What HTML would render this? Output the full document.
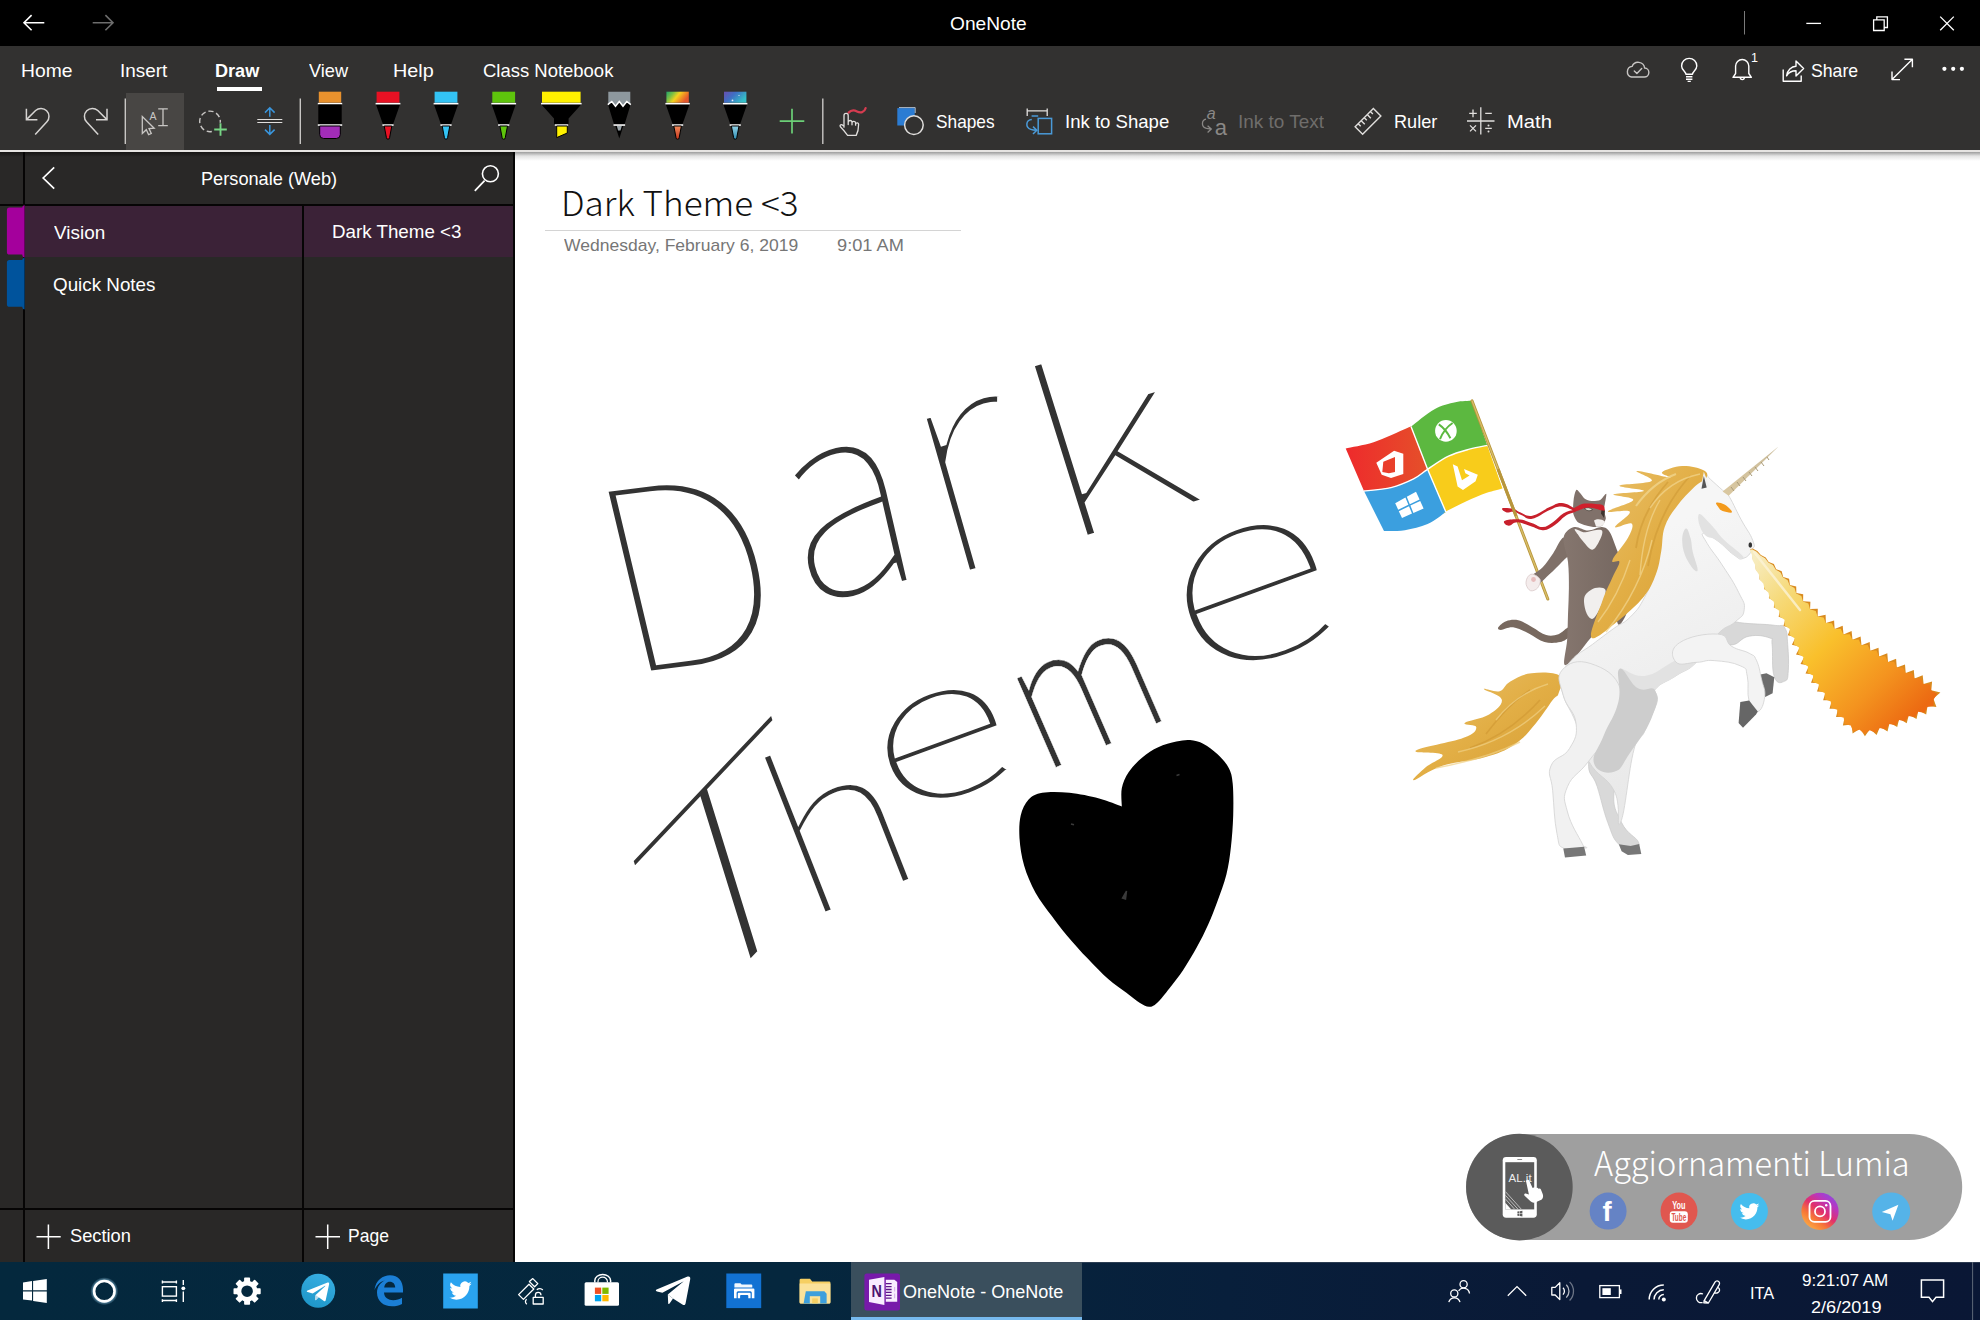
<!DOCTYPE html>
<html lang="en">
<head>
<meta charset="utf-8">
<title>OneNote</title>
<style>
*{margin:0;padding:0;box-sizing:border-box}
html,body{width:1980px;height:1320px;overflow:hidden;background:#fff}
body{position:relative;font-family:"Liberation Sans","DejaVu Sans",sans-serif;color:#fff}
.abs{position:absolute}
.t{position:absolute;white-space:nowrap;line-height:1;color:#fff;transform-origin:0 0}
svg{position:absolute;overflow:visible}
#titlebar{left:0;top:0;width:1980px;height:46px;background:#000}
#ribbon{left:0;top:46px;width:1980px;height:104px;background:#323130}
#ribline{left:0;top:150px;width:1980px;height:2px;background:#e6e4e2}
#nav{left:0;top:152px;width:514px;height:1110px;background:#292827}
#navshadow{left:0;top:152px;width:514px;height:5px;background:linear-gradient(#161514,#292827)}
#pageshadow{left:514px;top:152px;width:1466px;height:9px;background:linear-gradient(#9d9d9d,#e4e4e4 45%,#fff)}
.vline{position:absolute;background:#060505}
.hline{position:absolute;background:#060505}
#selrow{left:24px;top:205px;width:490px;height:52px;background:#3b2237}
#taskbar{left:0;top:1262px;width:1980px;height:58px;background:linear-gradient(90deg,#04283d 0%,#05273e 40%,#081f3b 62%,#0a1936 80%,#0a1735 100%)}
#tbactive{left:851px;top:1262px;width:231px;height:58px;background:#3a4f5d}
#tbactiveline{left:851px;top:1317px;width:231px;height:3px;background:#76b9ed}
.lt{font-family:"Noto Sans CJK SC","Liberation Sans",sans-serif;font-weight:300}
</style>
</head>
<body>
<!-- ===== window chrome ===== -->
<div id="titlebar" class="abs"></div>
<div id="ribbon" class="abs"></div>
<div id="ribline" class="abs"></div>
<div id="nav" class="abs"></div>
<div id="navshadow" class="abs"></div>
<div id="pageshadow" class="abs"></div>
<div class="abs" id="drawline" style="left:217px;top:87px;width:45px;height:4px;background:#fff"></div>
<div class="abs" id="selTool" style="left:126px;top:93px;width:58px;height:57px;background:#484644"></div>
<!-- ===== navigation panel ===== -->
<div id="selrow" class="abs"></div>
<div class="vline" style="left:23px;top:152px;width:2px;height:1110px"></div>
<div class="vline" style="left:302px;top:205px;width:2px;height:1057px"></div>
<div class="hline" style="left:0;top:204px;width:514px;height:1.5px"></div>
<div class="hline" style="left:0;top:1208px;width:514px;height:1.5px"></div>
<div class="abs" id="titleline" style="left:545px;top:230px;width:416px;height:1px;background:#d4d4d4"></div>
<!-- ===== taskbar ===== -->
<div id="taskbar" class="abs"></div>
<div id="tbactive" class="abs"></div>
<div id="tbactiveline" class="abs"></div>
<!-- ===== title bar + ribbon icons ===== -->
<svg id="ribsvg" width="1980" height="152" viewBox="0 0 1980 152" style="left:0;top:0" fill="none" stroke-linecap="butt" stroke-linejoin="miter">
<defs>
<linearGradient id="gRain" x1="0" y1="0" x2="1" y2="0.4"><stop offset="0" stop-color="#1fa36b"/><stop offset="0.3" stop-color="#7bc043"/><stop offset="0.55" stop-color="#f4d21f"/><stop offset="0.8" stop-color="#f08a24"/><stop offset="1" stop-color="#e4572e"/></linearGradient>
<linearGradient id="gRainTip" x1="0" y1="0" x2="0" y2="1"><stop offset="0" stop-color="#f08a5a"/><stop offset="1" stop-color="#c8351c"/></linearGradient>
<linearGradient id="gGal" x1="0" y1="0" x2="1" y2="0.5"><stop offset="0" stop-color="#6a4fb0"/><stop offset="0.45" stop-color="#3f6fc4"/><stop offset="1" stop-color="#35c0c8"/></linearGradient>
<linearGradient id="gGalTip" x1="0" y1="0" x2="0" y2="1"><stop offset="0" stop-color="#8fd0e6"/><stop offset="1" stop-color="#2f8fb4"/></linearGradient>
</defs>
<!-- title bar -->
<g stroke="#fff" stroke-width="1.6">
<path d="M44.3 22.7H24M31.6 15.1L24 22.7l7.6 7.6"/>
</g>
<g stroke="#6d6d6d" stroke-width="1.6">
<path d="M92.7 22.7H113M105.4 15.1l7.6 7.6-7.6 7.6"/>
</g>
<path d="M1744.5 11V34.5" stroke="#7a7a7a" stroke-width="1"/>
<g stroke="#fff" stroke-width="1.3">
<path d="M1806.3 23.4H1821"/>
<path d="M1873.6 19.9h10.6v10.6h-10.6zM1876.8 19.9v-3h10.6v10.6h-3.2"/>
<path d="M1940.2 16.6l13.6 13.6M1953.8 16.6l-13.6 13.6"/>
</g>
<!-- right side of tab row -->
<g stroke="#c8c6c4" stroke-width="1.4" stroke-linejoin="round" stroke-linecap="round">
<path d="M1631.500 77h12.600a4.500 4.500 0 0 0 .5-9a6.500 6.500 0 0 0-12.500-1.600a5.400 5.400 0 0 0-.6 10.600z"/>
<path d="M1634.300 71l2.600 2.600l4.800-5"/>
</g>
<g stroke="#fff" stroke-width="1.4" stroke-linejoin="round">
<path d="M1686 76.800h6.400M1686 79.200h6.400M1687.600 81.400h3.200"/>
<path d="M1685.900 74.300c0-2.800-4.300-4.200-4.300-8.400a7.600 7.600 0 0 1 15.200 0c0 4.200-4.300 5.600-4.300 8.400z"/>
<path d="M1733 77.3h18.4l-2.6-3.8v-7.4a6.6 6.6 0 0 0-13.2 0v7.4z"/>
<path d="M1740.3 77.6a2 2 0 0 0 4 0"/>
<path d="M1783.200 69.600V81.300H1801.200V75.400"/>
<path d="M1786.600 75.800c.7-5.800 4.800-9.300 9.400-9.500v-5.300l7.600 7.500l-7.600 7.500v-5.200c-4.200 0-7.200 1.400-9.400 5z"/>
<path d="M1892 79.6l20.400-20.400M1904.4 59.2h8v8M1892 71.600v8h8"/>
</g>
<g fill="#fff" stroke="none">
<circle cx="1944.400" cy="68.800" r="2.100"/><circle cx="1953.200" cy="68.800" r="2.100"/><circle cx="1961.900" cy="68.800" r="2.100"/>
</g>
<!-- undo / redo -->
<g stroke="#d6d4d2" stroke-width="1.5">
<path d="M26.4 108.800V119.700H37.400"/>
<path d="M26.700 119.400L35.600 110.500A8 8 0 0 1 46.900 121.800L35.200 134.600"/>
<path d="M107 108.800V119.700H96"/>
<path d="M106.700 119.400L97.800 110.500A8 8 0 0 0 86.500 121.800L98.200 134.600"/>
</g>
<!-- separators -->
<g stroke="#c8c6c4" stroke-width="1.4">
<path d="M125.300 98.500V144M300.300 98.500V144M822.800 98.500V144"/>
</g>
<!-- type / select tool -->
<g stroke="#c8c6c4" stroke-width="1.3" stroke-linejoin="miter">
<path d="M142.300 116.600V133.400L146.300 129.700L148.600 134.700L151.300 133.500L149 128.600L154.200 128.200Z"/>
<path d="M158.200 108.900H167.800M158.200 125.600H167.800M163 108.900V125.600"/>
</g>
<text x="149.600" y="119.600" font-family="'Liberation Sans',sans-serif" font-size="10.5" fill="#c8c6c4" stroke="none">A</text>
<!-- lasso select -->
<circle cx="210" cy="121.400" r="10.300" stroke="#c8c6c4" stroke-width="1.4" stroke-dasharray="5.200 2.900" stroke-dashoffset="2"/>
<path d="M220.500 122.800V136.200M213.800 129.500H227.200" stroke="#323130" stroke-width="5"/>
<path d="M220.500 123.200V135.800M214.200 129.500H226.800" stroke="#77d685" stroke-width="1.9"/>
<!-- insert space -->
<path d="M257.300 119.500H282.300M257.300 122.500H282.300" stroke="#e1dfdd" stroke-width="1.2"/>
<g stroke="#3a96dd" stroke-width="1.5">
<path d="M269.800 116.800V108.200M265 112.600L269.800 107.800L274.600 112.600"/>
<path d="M269.800 125V134M265 129.600L269.800 134.400L274.600 129.600"/>
</g>
<!-- pens -->
<g stroke="none">
 <!-- eraser-like marker -->
 <rect x="318.800" y="91.700" width="22.400" height="11" fill="#e8912d"/>
 <rect x="317.800" y="102.900" width="24.400" height="1.500" fill="#fff"/>
 <rect x="318.300" y="104.500" width="23.400" height="20" fill="#000"/>
 <rect x="317.800" y="124.300" width="24.400" height="1.500" fill="#fff"/>
 <path d="M319.700 126h20.600v8.500a4 4 0 0 1-4 4h-12.600a4 4 0 0 1-4-4z" fill="#a22cb8" stroke="#000" stroke-width="1"/>
 <!-- red pen -->
 <rect x="376.600" y="91.700" width="22.800" height="11" fill="#e81123"/>
 <path d="M376 104.500h24l-7 20h-10z" fill="#000"/>
 <rect x="375.600" y="102.900" width="24.800" height="1.500" fill="#fff"/>
 <rect x="382.400" y="124.300" width="11.200" height="1.500" fill="#fff"/>
 <path d="M384.200 126h7.600l-2.200 11.600a1.600 1.600 0 0 1-3.200 0z" fill="#e81123" stroke="#000" stroke-width="1"/>
 <!-- blue pen -->
 <rect x="434.600" y="91.700" width="22.800" height="11" fill="#33c3f4"/>
 <path d="M434 104.500h24l-7 20h-10z" fill="#000"/>
 <rect x="433.600" y="102.900" width="24.800" height="1.500" fill="#fff"/>
 <rect x="440.400" y="124.300" width="11.200" height="1.500" fill="#fff"/>
 <path d="M442.200 126h7.600l-2.200 11.600a1.600 1.600 0 0 1-3.200 0z" fill="#33c3f4" stroke="#000" stroke-width="1"/>
 <!-- green pen -->
 <rect x="492.300" y="91.700" width="22.800" height="11" fill="#5ec40c"/>
 <path d="M491.700 104.500h24l-7 20h-10z" fill="#000"/>
 <rect x="491.300" y="102.900" width="24.800" height="1.500" fill="#fff"/>
 <rect x="498.100" y="124.300" width="11.200" height="1.500" fill="#fff"/>
 <path d="M499.900 126h7.600l-2.200 11.600a1.600 1.600 0 0 1-3.200 0z" fill="#5ec40c" stroke="#000" stroke-width="1"/>
 <!-- yellow highlighter -->
 <rect x="542" y="91.700" width="38.600" height="11" fill="#fff100"/>
 <path d="M541.400 104.500h39.800l-12.600 14v6h-14.600v-6z" fill="#000"/>
 <rect x="541" y="102.900" width="40.600" height="1.500" fill="#fff"/>
 <rect x="554.800" y="124.300" width="13.400" height="1.500" fill="#fff"/>
 <path d="M556.700 126h10.600v7l-10.600 4.600z" fill="#fff100" stroke="#000" stroke-width="1"/>
 <!-- pencil -->
 <path d="M608.300 91.700h22v14l-4 -3l-3.500 4.500l-3.500 -4.500l-3.500 4.500l-3.500 -4.500l-4 3z" fill="#8e989e"/>
 <path d="M608 104.500l3.800 -3l3.700 4.700l3.800 -4.700l3.700 4.700l3.800 -4.700l3.800 3l-6 19.800h-10.600z" fill="#000"/>
 <path d="M607.800 104.700l4 -3.200l3.700 4.700l3.800 -4.700l3.700 4.700l3.800 -4.700l4 3.200" fill="none" stroke="#fff" stroke-width="1.500"/>
 <rect x="613.500" y="124.300" width="11.600" height="1.500" fill="#fff"/>
 <path d="M615.300 126h8l-4 12.500z" fill="#000"/>
 <path d="M616.800 126h5l-1.300 4.500h-2.400z" fill="#9aa3a8"/>
 <!-- rainbow pen -->
 <rect x="666.400" y="91.700" width="22.400" height="11" fill="url(#gRain)"/>
 <path d="M665.800 104.500h23.600l-7 20h-9.600z" fill="#000"/>
 <rect x="665.400" y="102.900" width="24.400" height="1.500" fill="#fff"/>
 <rect x="672" y="124.300" width="11.200" height="1.500" fill="#fff"/>
 <path d="M673.800 126h7.600l-2.200 11.600a1.600 1.600 0 0 1-3.200 0z" fill="url(#gRainTip)" stroke="#000" stroke-width="1"/>
 <!-- galaxy pen -->
 <rect x="724" y="91.700" width="22.400" height="11" fill="url(#gGal)"/>
 <circle cx="732.500" cy="100.400" r="0.900" fill="#e8f0ff"/><circle cx="739" cy="95.500" r="0.600" fill="#e8f0ff"/>
 <path d="M723.400 104.500h23.600l-7 20h-9.600z" fill="#000"/>
 <rect x="723" y="102.900" width="24.400" height="1.500" fill="#fff"/>
 <rect x="729.600" y="124.300" width="11.200" height="1.500" fill="#fff"/>
 <path d="M731.400 126h7.600l-2.200 11.600a1.600 1.600 0 0 1-3.200 0z" fill="url(#gGalTip)" stroke="#000" stroke-width="1"/>
</g>
<!-- add pen -->
<path d="M792 108.800V133.400M779.700 121.100H804.300" stroke="#6ccf77" stroke-width="1.700"/>
<!-- draw with touch -->
<path d="M848.600 112.600c3-3.200 5.800-2.600 8.400-1.200c3.400 1.800 7.400 1 8.600-3.200" stroke="#d63c50" stroke-width="2.300" stroke-linecap="round"/>
<path d="M844 127.200V115.400a2.100 2.100 0 0 1 4.200 0V124.600M848.200 122.400a1.900 1.900 0 0 1 3.800 0v2.400M852 123a1.800 1.800 0 0 1 3.600 .2v2M855.600 124.200a1.500 1.500 0 0 1 3 .3c0 5-.4 7.300-2.400 10.900h-8.600c-2.400-3.200-4.600-6-7.200-8.600c-1-1.300.4-2.700 1.900-1.900l1.700 1.400" stroke="#e1dfdd" stroke-width="1.300" stroke-linecap="round" stroke-linejoin="round"/>
<!-- shapes -->
<rect x="897.300" y="108.100" width="17.400" height="17.400" fill="#2b7cd3"/>
<path d="M899 107.600H915.200V113" stroke="#cfe0f2" stroke-width="1" opacity=".8"/>
<circle cx="913.900" cy="125.100" r="9.300" fill="#323130" stroke="#e1dfdd" stroke-width="1.500"/>
<!-- ink to shape -->
<path d="M1027 110.800H1047.400M1027.200 108.400V116M1047.200 108.400V116" stroke="#e1dfdd" stroke-width="1.300"/>
<g stroke="#4a9ad8" stroke-width="1.500">
<rect x="1038.200" y="118.400" width="13.400" height="15.400"/>
<path d="M1031.800 119.600c-6 .4-6.800 7.600-1 9.800c1.600.6 3.400.8 5.400.8M1033 126.600L1036.800 130.300L1033 134"/>
</g>
<path d="M1038.200 116H1031.600" stroke="#4a9ad8" stroke-width="1.500"/>
<!-- ink to text (disabled) -->
<g stroke="#8a8886" stroke-width="1.300">
<path d="M1206 119.200c-4.600 1-4.800 7.200-.2 9c1.400.5 3 .6 4.600.6M1207.600 125.700L1211.300 129L1207.600 132.400"/>
</g>
<text x="1206.800" y="118.600" font-family="'Liberation Sans',sans-serif" font-style="italic" font-size="16" fill="#8a8886" stroke="none">a</text>
<text x="1214.800" y="134.800" font-family="'Liberation Sans',sans-serif" font-size="22" fill="#8a8886" stroke="none">a</text>
<!-- ruler -->
<g transform="translate(1368 121.400) rotate(-45)" stroke="#e1dfdd" stroke-width="1.400">
<rect x="-12.900" y="-5.300" width="25.800" height="10.600"/>
<path d="M-8.600 -5.300v3.600M-4.300 -5.300v5M0 -5.300v3.600M4.300 -5.300v5M8.600 -5.300v3.600"/>
</g>
<!-- math -->
<g stroke="#e1dfdd" stroke-width="1.300">
<path d="M1480.800 107.300V134.400M1467 121H1494.500"/>
<path d="M1473 109.600v7.600M1469.200 113.400h7.600M1485.200 113.400h6.600M1470 125.400l6 6M1476 125.400l-6 6M1485.200 128.400h6.600"/>
</g>
<circle cx="1488.500" cy="125.400" r="1" fill="#e1dfdd"/><circle cx="1488.500" cy="131.400" r="1" fill="#e1dfdd"/>
</svg>
<!-- ===== navigation icons ===== -->
<svg id="navsvg" width="516" height="1110" viewBox="0 152 516 1110" style="left:0;top:152px" fill="none">
<path d="M513 152H515V1262H513z" fill="#050505"/>
<!-- section colour tabs -->
<path d="M9.500 207.600H22.300C22.300 206.400 23.200 205.300 24.600 205.300V257.700C23.200 257.700 22.300 256.300 22.300 254.600H9.500A2.600 2.600 0 0 1 6.900 252V210.200A2.600 2.600 0 0 1 9.500 207.600Z" fill="#a4009c"/>
<path d="M9.500 260H22.300C22.300 258.800 23.200 257.700 24.600 257.700V309.500C23.200 309.500 22.300 308.300 22.300 306.800H9.500A2.600 2.600 0 0 1 6.900 304.200V262.600A2.600 2.600 0 0 1 9.500 260Z" fill="#00539c"/>
<!-- back chevron + search -->
<path d="M54.200 167.400L43.200 178L54.200 188.600" stroke="#fff" stroke-width="1.700"/>
<circle cx="490.400" cy="173.800" r="8" stroke="#fff" stroke-width="1.600"/>
<path d="M484.600 180.600L474.800 190.800" stroke="#fff" stroke-width="1.700"/>
<!-- add section / add page -->
<path d="M48.400 1224.400V1249M36.500 1236.700H60.700" stroke="#fff" stroke-width="1.500"/>
<path d="M327.700 1224.400V1249M315.500 1236.700H340" stroke="#fff" stroke-width="1.500"/>
</svg>
<!-- ===== page canvas: ink + pasted illustration ===== -->
<svg id="artsvg" width="1466" height="1100" viewBox="514 160 1466 1100" style="left:514px;top:160px" fill="none">
<defs>
<linearGradient id="gFire" gradientUnits="userSpaceOnUse" x1="1756" y1="556" x2="1915" y2="715"><stop offset="0" stop-color="#f7ecc0"/><stop offset="0.22" stop-color="#f6d977"/><stop offset="0.5" stop-color="#f9c02c"/><stop offset="0.78" stop-color="#f4941f"/><stop offset="1" stop-color="#ec6a12"/></linearGradient>
<linearGradient id="gMane" x1="0" y1="0" x2="1" y2="1"><stop offset="0" stop-color="#e9c06a"/><stop offset="0.5" stop-color="#e2ae45"/><stop offset="1" stop-color="#d59c33"/></linearGradient>
<linearGradient id="gRed" x1="0" y1="0" x2="1" y2="0"><stop offset="0" stop-color="#ee2a2c"/><stop offset="1" stop-color="#e5502a"/></linearGradient>
<linearGradient id="gBody" gradientUnits="userSpaceOnUse" x1="1600" y1="560" x2="1700" y2="760"><stop offset="0" stop-color="#f6f6f6"/><stop offset="1" stop-color="#e9e9e9"/></linearGradient>
<linearGradient id="gCat" x1="0" y1="0" x2="1" y2="0"><stop offset="0" stop-color="#85766e"/><stop offset="1" stop-color="#74665f"/></linearGradient>
<linearGradient id="gHorn" gradientUnits="userSpaceOnUse" x1="1726" y1="491" x2="1778" y2="447"><stop offset="0" stop-color="#d9c7a0"/><stop offset="1" stop-color="#cbbd9c"/></linearGradient>
</defs>
<g id="ink" font-family="'Noto Sans CJK SC','Liberation Sans',sans-serif" font-weight="100" font-size="100" fill="#333" stroke="#fff">
<text vector-effect="non-scaling-stroke" stroke-width="3.9" transform="matrix(2.6800 -0.3400 0.5991 2.5150 620.18 676.42)">D</text>
<text vector-effect="non-scaling-stroke" stroke-width="3.2" transform="matrix(2.4447 -0.5644 0.6159 2.6676 799.34 606.42)">a</text>
<text vector-effect="non-scaling-stroke" stroke-width="6.3" transform="matrix(3.2680 -0.9400 0.8502 2.9713 933.35 583.32)">r</text>
<text vector-effect="non-scaling-stroke" stroke-width="4.5" transform="matrix(3.1241 -0.9798 0.6789 2.1659 1053.00 547.59)">k</text>
<text vector-effect="non-scaling-stroke" stroke-width="5.1" transform="matrix(2.7929 -2.9480 0.7244 2.3380 674.46 1040.93)">T</text>
<text vector-effect="non-scaling-stroke" stroke-width="3.0" transform="matrix(2.2632 -0.8909 0.7755 1.9714 800.87 922.76)">h</text>
<text vector-effect="non-scaling-stroke" stroke-width="3.4" transform="matrix(2.5924 -0.9436 0.6688 1.8376 890.88 819.62)">e</text>
<text vector-effect="non-scaling-stroke" stroke-width="0.4" transform="matrix(1.5375 -0.6713 0.7387 1.6914 1039.78 774.60)">m</text>
<text vector-effect="non-scaling-stroke" stroke-width="5.3" transform="matrix(3.1109 -1.1323 0.8513 2.3388 1192.05 687.09)">e</text>
</g>
<path id="heart" d="M1121.8 806.4C1118 805 1107.8 800.7 1099.1 798.4C1090.4 796.1 1079 793.7 1069.5 792.7C1060.1 791.8 1049.1 791.6 1042.3 792.7C1035.5 793.9 1032.2 795.8 1028.6 799.5C1025 803.3 1022.2 809 1020.7 815.5C1019.2 821.9 1019 829.8 1019.5 838.2C1020.1 846.5 1021.4 856.4 1024.1 865.5C1026.7 874.5 1030.9 884.4 1035.5 892.7C1040 901.1 1046.1 908.3 1051.4 915.5C1056.7 922.7 1061.2 928.7 1067.3 935.9C1073.3 943.1 1080.9 951.4 1087.7 958.6C1094.5 965.8 1101.7 973.4 1108.2 979.1C1114.6 984.8 1121.1 988.8 1126.4 992.7C1131.7 996.7 1136.2 1000.6 1140 1003C1143.8 1005.3 1146.2 1006.8 1149.1 1006.8C1151.9 1006.8 1153.6 1006.1 1157 1003C1160.5 999.8 1165.2 993.7 1169.5 988.2C1173.9 982.7 1178.6 976.8 1183.2 970C1187.7 963.2 1192.7 954.8 1196.8 947.3C1201 939.7 1204.8 932.1 1208.2 924.5C1211.6 917 1214.2 910.2 1217.3 901.8C1220.3 893.5 1224.1 883.6 1226.4 874.5C1228.6 865.5 1229.8 857.1 1230.9 847.3C1232 837.4 1232.9 826.1 1233.2 815.5C1233.5 804.8 1233.5 791.6 1232.7 783.6C1232 775.7 1231.2 772.7 1228.6 767.7C1226.1 762.8 1221.4 758.1 1217.3 754.1C1213.1 750.1 1208.2 746.2 1203.6 743.9C1199.1 741.5 1194.5 740.4 1190 740C1185.5 739.6 1181.7 740.4 1176.4 741.6C1171.1 742.8 1163.9 744.6 1158.2 747.3C1152.5 749.9 1147.2 753.3 1142.3 757.5C1137.3 761.7 1132 767.2 1128.6 772.3C1125.2 777.4 1123 782.5 1121.8 788.2C1120.7 793.9 1121.8 803.3 1121.8 806.4Z" fill="#000"/>
<path d="M1176.500 775.500l3-1M1071 824l3 .8M1122.500 898l4-7l-1 8z" stroke="#3a3a3a" stroke-width="1.500" fill="#3a3a3a"/>
<g id="illus">
<path d="M1364 491C1368.5 490.5 1382.7 489.6 1391 487.6C1399.3 485.5 1407.5 481.9 1413.6 478.9C1419.7 475.8 1425.2 470.9 1427.6 469.3L1427.6 469.3L1445.9 512L1445.9 512C1442.8 514 1434.4 521.1 1427.6 524.1C1420.7 527.2 1412.2 529.1 1404.9 530.2C1397.7 531.4 1387.5 531 1384 531.1L1384 531.1L1364 491Z" fill="#3b9fdf"/>
<path d="M1427.6 469.3C1431 467.1 1441.5 459.5 1448.5 456.2C1455.4 452.9 1462.9 451 1469.4 449.2C1475.8 447.4 1484.3 446 1487.3 445.4L1487.3 445.4L1502.5 488.4L1502.5 488.4C1499.9 489.2 1492.9 490.6 1486.8 492.8C1480.7 495 1472.9 498.3 1465.9 501.5C1458.9 504.7 1448.3 510.2 1445 512C1441.6 513.7 1445.7 512 1445.9 512L1445.9 512L1427.6 469.3Z" fill="#f8cc1b"/>
<path d="M1345.7 448.4C1350.3 447.3 1363.4 445.6 1373.6 442.3C1383.7 438.9 1400.4 430.9 1406.7 428.3C1412.9 425.7 1410.3 426.9 1411 426.6L1411 426.6L1427.6 469.3L1427.6 469.3C1425.2 470.9 1419.7 475.8 1413.6 478.9C1407.5 481.9 1399.3 485.5 1391 487.6C1382.7 489.6 1368.5 490.5 1364 491Z" fill="url(#gRed)"/>
<path d="M1411 426.6C1414.9 423.7 1427.1 413.2 1434.5 409.2C1441.9 405.1 1449.2 403.6 1455.4 402.2C1461.7 400.8 1469.2 401 1472 400.8L1472 400.8L1487.3 445.4L1487.3 445.4C1484.3 446 1475.8 447.4 1469.4 449.2C1462.9 451 1455.4 452.9 1448.5 456.2C1441.5 459.5 1431 467.1 1427.6 469.3L1427.6 469.3L1411 426.6Z" fill="#5cb840"/>
<path d="M1364 491C1368.5 490.5 1382.7 489.6 1391 487.6C1399.3 485.5 1407.5 481.9 1413.6 478.9C1419.7 475.8 1421.8 473 1427.6 469.3C1433.4 465.5 1441.5 459.5 1448.5 456.2C1455.4 452.9 1462.9 451 1469.4 449.2C1475.8 447.4 1484.3 446 1487.3 445.4" stroke="#fff" stroke-width="1.400"/>
<path d="M1411 426.6L1427.6 469.3L1445.9 512" stroke="#fff" stroke-width="1.400"/>
<g fill="#fff">
<path d="M1376.3 462.8 L1394.1 450.8 L1403.3 453.8 L1403.3 474.1 L1391.0 478.0 L1381.7 474.8ZM1383.3 461.8 L1395.0 457.1 L1395.0 471.9 L1388.9 473.3 L1382.3 471.9Z" fill-rule="evenodd"/>
<circle cx="1445.900" cy="430.900" r="10.800"/>
<path d="M1395.200 503.200L1405.400 497.600L1408.400 504.800L1398.200 509.800ZM1406.800 496.800L1416 491.800L1419.600 499.600L1409.800 504.200ZM1398.800 511.200L1409 506.200L1412 513.600L1402 518ZM1410.400 505.600L1420.200 501L1423.600 508.600L1413.400 513Z"/>
<path d="M1452.800 464.200L1457.600 466.400L1462 480.200L1469.600 475.400L1465.400 473.200L1464 469L1477.800 474.800L1475.600 481.200L1463 490L1457.600 486.600Z"/>
</g>
<path d="M1438.800 424.400C1442 426.600 1447 431.600 1450.400 438.200M1452.600 423C1448.600 425.600 1443 431.600 1440 439.200" stroke="#5cb840" stroke-width="2"/>
<path d="M1472 400.800L1547.800 599" stroke="#b8963c" stroke-width="3" stroke-linecap="round"/>
<path d="M1472 400.800L1547.800 599" stroke="#d9bf6a" stroke-width="1.200" stroke-linecap="round"/>
<path d="M1568.9 627.3C1567 627 1562.2 632.9 1558.4 634.3C1554.6 635.6 1550.6 636.3 1546.2 635.1C1541.8 634 1536.9 629.8 1532.3 627.3C1527.6 624.8 1522.7 621.3 1518.3 620.3C1514 619.3 1509.5 620 1506.1 621.2C1502.8 622.3 1499.2 625.8 1498.3 627.3C1497.4 628.7 1498.4 629.9 1500.9 629.9C1503.4 629.9 1508.5 626.7 1513.1 627.3C1517.7 627.9 1523.6 630.9 1528.8 633.4C1534 635.8 1539.2 640.6 1544.5 642.1C1549.7 643.5 1555.9 643.1 1560.1 642.1C1564.3 641.1 1568.3 638.5 1569.7 636C1571.2 633.5 1570.7 627.6 1568.9 627.3Z" fill="#78695f"/>
<path d="M1563.6 537.6C1560.7 537.9 1556.7 548.3 1553.2 553.2C1549.7 558.2 1546.2 563.5 1542.7 567.2C1539.2 570.8 1534.4 573 1532.3 575C1530.1 577 1528.8 577.8 1529.7 579.4C1530.5 581 1534.2 585.5 1537.5 584.6C1540.8 583.7 1545.6 577.9 1549.7 574.1C1553.8 570.4 1558.4 565.7 1561.9 562C1565.4 558.2 1570.3 555.6 1570.6 551.5C1570.9 547.4 1566.5 537.3 1563.6 537.6Z" fill="#7f7068"/>
<path d="M1574.1 527.1C1570 528.3 1564.6 531.8 1563.6 537.6C1562.6 543.4 1567.1 553.5 1568 562C1568.9 570.4 1568.9 579.4 1568.9 588.1C1568.9 596.8 1568.3 605.5 1568 614.2C1567.7 622.9 1567.7 631.9 1567.1 640.3C1566.5 648.8 1562.8 662.4 1564.5 664.7C1566.2 667.1 1573.1 658.9 1577.6 654.3C1582.1 649.6 1585.7 643.3 1591.5 636.9C1597.3 630.5 1607.8 618 1612.4 616C1617 613.9 1616.8 626.1 1619.4 624.7C1622 623.2 1627.2 614.8 1628.1 607.2C1629 599.7 1625.6 587.2 1624.6 579.4C1623.6 571.5 1623.1 564.9 1622 560.2C1620.8 555.6 1619.7 556.1 1617.6 551.5C1615.6 546.9 1612.4 536.4 1609.8 532.3C1607.2 528.3 1605.6 527.4 1602 527.1C1598.3 526.8 1592.7 530.6 1588 530.6C1583.4 530.6 1578.1 525.9 1574.1 527.1Z" fill="url(#gCat)"/>
<path d="M1532.3 574.1C1530.1 573.9 1528.4 575.9 1527.4 577.6C1526.4 579.4 1525.6 582.4 1526.2 584.6C1526.7 586.8 1528.6 590.1 1530.5 590.7C1532.4 591.3 1535.9 590 1537.5 588.1C1539.1 586.2 1541 581.7 1540.1 579.4C1539.2 577 1534.4 574.4 1532.3 574.1Z" fill="#f4ecec" stroke="#d9c9c9" stroke-width=".8"/>
<circle cx="1533.500" cy="579.500" r="2.400" fill="#e7bcbc"/>
<path d="M1574.9 528.9C1576.1 528.6 1581.5 532 1584.5 532.3C1587.6 532.6 1590.3 530.9 1593.2 530.6C1596.1 530.3 1600.8 529.1 1602 530.6C1603.1 532 1601.8 536.1 1600.2 539.3C1598.6 542.5 1595.3 549.5 1592.4 549.8C1589.5 550 1585.3 543.7 1582.8 541C1580.3 538.4 1578.9 536.1 1577.6 534.1C1576.3 532 1573.8 529.1 1574.9 528.9Z" fill="#f3f0ee"/>
<path d="M1595 588.1C1598.5 586.9 1604.3 587.2 1605.4 589.8C1606.6 592.4 1604 599 1602 603.8C1599.9 608.6 1595.9 617.1 1593.2 618.6C1590.6 620 1587.7 616.1 1586.3 612.5C1584.8 608.8 1583.1 600.9 1584.5 596.8C1586 592.7 1591.5 589.2 1595 588.1Z" fill="#f1efee"/>
<path d="M1576.7 489.7C1575.4 489.8 1574.1 496.5 1573.7 499.2C1573.3 502 1572.8 510.5 1573.2 513.2C1573.7 515.8 1576 520.5 1577.6 521.9C1579.1 523.3 1584.2 524.8 1586.3 525.4C1588.3 526 1593.2 527.1 1595 527.1C1596.8 527.1 1600.7 526.7 1602 525.7C1603.2 524.7 1605.5 520.3 1605.8 518.4C1606 516.5 1604 512.5 1604 509.7C1604.1 506.8 1606.8 495.1 1606.3 494C1605.9 492.9 1601.9 499.3 1600.2 500.1C1598.5 500.9 1593.3 501.2 1591.5 501C1589.7 500.8 1586.3 499.7 1584.5 498.4C1582.8 497 1578 489.5 1576.7 489.7Z" fill="#80716a"/>
<path d="M1594 520.500C1597 518.500 1602 519 1604.800 521.500C1604 525.500 1600 527.500 1596 526.500Z" fill="#f3f0ee"/>
<path d="M1584.500 508.500C1587 507 1590.500 507.600 1592.500 509.600C1590 511.400 1586.500 511 1584.500 508.500Z" fill="#d9e3d4" stroke="#3d342f" stroke-width=".7"/>
<path d="M1601.600 508.800L1605 510.500L1604 518L1601 513.500Z" fill="#3d342f"/>
<path d="M1573.2 508.8C1574.6 507.7 1580.7 504.1 1584.5 503.6C1588.4 503.1 1599.3 504 1602 504.8C1604.6 505.6 1604.6 508.6 1604.7 509.3C1604.9 510.1 1605.1 510.8 1602.8 510.6C1600.6 510.3 1591.8 507.4 1588 507.6C1584.2 507.8 1576.4 511.6 1574.4 511.8C1572.5 511.9 1571.9 509.9 1573.2 508.8Z" fill="#d1202b"/>
<path d="M1574.1 508.3C1571.6 506.8 1566.8 503.3 1561.9 503.1C1557 502.8 1555.6 504.5 1549.7 507.1C1543.8 509.6 1538.2 514.7 1532.3 515.8C1526.3 516.8 1523.9 513.7 1520.1 512.3C1516.2 510.9 1516.7 509.6 1513.1 508.8C1509.5 508 1503.7 507.6 1502.3 508.3C1500.9 509 1503.8 511.6 1506.1 512.3C1508.5 513 1510.8 511.2 1514 511.8C1517.1 512.4 1518.2 513.9 1521.8 515.3C1525.5 516.7 1526.7 519.8 1532.3 518.7C1537.8 517.7 1543.8 512.5 1549.7 510C1555.6 507.6 1557 506.4 1561.9 506.6C1566.8 506.7 1571.6 510.2 1574.1 510.6C1576.5 510.9 1576.5 509.8 1574.1 508.3Z" fill="#c8202c"/>
<path d="M1574.1 510C1571.8 510.3 1567.8 510.8 1563.6 513.2C1559.4 515.5 1557.4 519.1 1553.2 521.9C1549 524.7 1546.9 526.8 1542.7 527.1C1538.5 527.4 1537.1 524.8 1532.3 523.3C1527.4 521.7 1523.9 519.7 1518.3 519.3C1512.8 518.8 1506.3 519.7 1504.4 521C1502.5 522.3 1506.1 525.5 1508.7 525.7C1511.4 526 1512.8 522 1517.5 522.2C1522.2 522.4 1527 525.2 1532.3 526.8C1537.5 528.4 1539.1 530.6 1543.6 530.2C1548.1 529.9 1550.6 527.9 1554.9 525C1559.3 522.2 1561.4 518.6 1565.4 516C1569.4 513.3 1573.2 513 1574.9 511.8C1576.7 510.6 1576.3 509.8 1574.1 510Z" fill="#c8202c"/>
<path d="M1498 469L1516 516" stroke="#b8963c" stroke-width="3"/>
<path d="M1560.1 675.9C1554.7 671.9 1541.4 672 1531.5 673.2C1521.5 674.3 1516.6 678 1510.3 681.6C1503.9 685.2 1505 689.7 1499.7 691.2C1494.4 692.7 1483.3 687.4 1483.8 689.1C1484.2 690.8 1500.7 694.6 1501.8 699.7C1502.8 704.7 1496.5 709.8 1489.1 714.5C1481.6 719.2 1467.2 720.4 1464.7 723C1462.1 725.5 1476.5 724.3 1476.3 727.2C1476.1 730.2 1475.7 733.2 1463.6 737.8C1451.5 742.5 1420.1 747.2 1415.9 750.6C1411.7 753.9 1440.5 751.4 1442.4 754.8C1444.3 758.2 1431.2 762.4 1425.4 767.5C1419.7 772.6 1410.4 780.6 1413.8 780.2C1417.2 779.9 1428.2 770.4 1442.4 765.8C1456.6 761.2 1470.4 761.6 1484.8 757.3C1499.2 753.1 1504.3 751.4 1514.5 744.6C1524.7 737.8 1528.1 732.3 1535.7 723.4C1543.3 714.5 1548.1 706.1 1552.7 700.1C1557.3 694.1 1557.1 698.1 1558.6 693.3C1560.1 688.5 1565.5 679.9 1560.1 675.9Z" fill="url(#gMane)"/>
<path d="M1530 690C1512 702 1500 716 1486 734M1540 700C1520 722 1498 738 1470 748" stroke="#d19a35" stroke-width="1.600" opacity=".7"/>
<path d="M1588.7 761.2C1587.7 777 1592.7 772.3 1597.2 786.6C1601.7 800.9 1602.9 809.3 1607.8 822.6C1612.8 836 1613 838.4 1618.4 843.9C1623.8 849.3 1626.4 846.4 1631.1 846C1635.8 845.6 1640.8 847.6 1638.5 842.2C1636.3 836.7 1627.3 834.6 1621.6 822.6C1615.9 810.7 1612.4 807.2 1614.2 790.8C1615.9 774.5 1620.6 769.5 1629 752.7C1637.4 735.8 1644.3 733.1 1650.2 718.7C1656.1 704.4 1660.9 699.1 1654.5 691.2C1648 683.3 1635 678.4 1622.6 684.8C1610.3 691.2 1609.4 700.9 1601.4 718.7C1593.5 736.6 1589.7 745.3 1588.7 761.2Z" fill="#d9d9d9" stroke="#c9c9c9" stroke-width=".7"/>
<path d="M1618.8 844.3L1630.7 846L1639.2 843.9L1641.3 854L1627.9 855.1L1621.6 851.3Z" fill="#777"/>
<path d="M1717.7 621.9C1725.4 618.6 1735.6 622.8 1749.1 623.6C1762.5 624.4 1766.9 624.3 1775.2 625.4C1783.5 626.4 1781.8 623.5 1784.8 628C1787.7 632.5 1786.9 634.6 1787.7 644.5C1788.5 654.5 1788.9 662.1 1788.3 670.7C1787.6 679.2 1788 679.7 1784.8 681.1C1781.5 682.5 1777.3 685.3 1774.3 676.8C1771.4 668.2 1773.2 653.6 1772.1 644.5C1771 635.5 1775 639.9 1769.6 637.9C1764.3 636 1757.9 634.5 1749.1 636.2C1740.2 637.8 1739.4 644.6 1731.6 644.9C1723.9 645.2 1719.2 642.9 1716 637.6C1712.7 632.2 1710 625.1 1717.7 621.9Z" fill="#d8d8d8" stroke="#c6c6c6" stroke-width=".7"/>
<path d="M1760.4 674.5L1766.5 673.3L1774.3 677.3L1772.6 693.3L1765.1 697.1L1763 688.1Z" fill="#6c6c6c"/>
<path d="M1562.6 677.6C1564.7 668.8 1564 668.5 1571.4 660.2C1578.8 651.9 1581.8 652.4 1592.3 644.5C1602.7 636.7 1603.6 635.8 1613.2 628.9C1622.8 621.9 1622.8 624.5 1630.6 616.7C1638.4 608.8 1638.9 607.9 1644.5 597.5C1650.2 587 1649.8 586.6 1653.2 574.8C1656.7 563.1 1654.1 569.1 1658.5 550.5C1662.8 531.8 1663.4 519.4 1670.5 500.4C1677.6 481.5 1679.2 481.9 1686.9 474.6C1694.7 467.3 1695.6 469.9 1701.5 471.1C1707.4 472.3 1705.3 474.6 1710.4 479.3C1715.6 484 1717.8 486 1722.2 489.9C1726.6 493.7 1723.3 487.2 1728 494.6C1732.7 501.9 1734.8 507.8 1740.9 519.2C1747.1 530.6 1749.9 532.7 1752.7 540.3C1755.5 548 1754.6 545.2 1752.2 549.7C1749.9 554.2 1747.9 557.1 1743.3 558.4C1738.7 559.7 1740.4 559.3 1733.9 554.9C1727.4 550.5 1725.1 546.2 1717.5 540.8C1709.8 535.4 1705.9 532.6 1703.4 533.3C1700.8 534 1702.4 535.3 1707.2 543.5C1712.1 551.7 1715.1 553.9 1722.9 566.1C1730.8 578.3 1733.3 581.4 1738.6 592.3C1743.9 603.2 1745.1 602.3 1744.2 609.7C1743.3 617.1 1741.7 615.8 1735.1 621.9C1728.5 628 1727.3 624.1 1717.7 634.1C1708.1 644.1 1707.2 651.5 1696.8 662C1686.3 672.4 1686.3 668.9 1675.9 675.9C1665.4 682.9 1661.1 682 1655 689.8C1648.9 697.7 1654.1 696.8 1651.5 707.2C1648.9 717.7 1648.9 721.2 1644.5 731.6C1640.2 742.1 1640.1 726.3 1634.1 749.1C1628.1 771.8 1625.5 812.2 1620.5 822.6C1615.5 833.1 1622.1 806.2 1614.2 790.8C1606.2 775.5 1598.3 778.1 1588.7 761.2C1579.2 744.2 1582.4 739.4 1576 723C1569.6 706.6 1566.6 706.8 1563.3 695.4C1559.9 684.1 1560.6 686.4 1562.6 677.6Z" fill="url(#gBody)" stroke="#d2d2d2" stroke-width=".8"/>
<path d="M1562.2 670C1555.8 677.4 1560.1 683.1 1563.3 695.4C1566.5 707.8 1574.5 710.6 1576 723C1577.5 735.4 1575.5 738.4 1569.6 748.4C1563.8 758.4 1554.9 755.9 1551 765.8C1547 775.7 1551.3 775.1 1552.7 790.8C1554.1 806.6 1554.2 819.8 1556.9 833.2C1559.6 846.7 1557.9 845.3 1564.3 848.5C1570.8 851.7 1580.3 848.1 1584.5 847C1588.7 845.9 1586.3 852 1582.4 843.9C1578.4 835.7 1571 825.4 1567.5 812C1564.1 798.7 1562.6 798.5 1567.5 786.6C1572.5 774.7 1578.3 775 1588.7 761.2C1599.1 747.3 1604.6 744 1612 727.2C1619.5 710.4 1625.5 703.9 1620.5 689.1C1615.6 674.2 1604.4 668.1 1590.8 663.6C1577.2 659.2 1568.6 662.6 1562.2 670Z" fill="#f1f1f1" stroke="#d2d2d2" stroke-width=".8"/>
<path d="M1563.3 848.5L1584.1 846.8L1586.2 855.5L1565 857.6Z" fill="#777"/>
<path d="M1620.1 668.9C1624.2 666.9 1632.3 677.5 1644.5 675.9C1656.7 674.3 1660.2 668.5 1672.4 662C1684.6 655.4 1686.2 654.3 1696.8 648C1707.4 641.7 1717.7 631.7 1717.7 634.9C1717.7 638.2 1706.6 652.4 1696.8 662C1687 671.5 1685.6 669.4 1675.9 675.9C1666.1 682.4 1660.7 682.5 1655 689.8C1649.3 697.1 1655.6 705.6 1651.5 707.2C1647.4 708.9 1643.3 702.1 1637.6 696.8C1631.9 691.5 1631.2 691.1 1627.1 684.6C1623 678.1 1616.1 671 1620.1 668.9Z" fill="#e2e2e2"/>
<path d="M1619.5 668.9C1623.9 665.7 1629.1 682.8 1637.5 688C1645.9 693.2 1652.3 684 1655.5 691.2C1658.7 698.4 1657.2 704.4 1651.3 718.7C1645.3 733.1 1638.7 740.3 1630.1 752.7C1621.4 765 1622.6 769.3 1614.2 771.8C1605.8 774.2 1596.5 771.7 1594 763.3C1591.5 754.9 1597.9 750.1 1603.6 735.7C1609.3 721.4 1614.7 717.4 1618.4 701.8C1622.1 686.2 1615 672.1 1619.5 668.9Z" fill="#cdcdcd"/>
<path d="M1679.4 642.8C1689.1 636.3 1705.5 633.3 1717.7 634.1C1729.9 634.9 1724.3 641.8 1731.6 646.3C1739 650.7 1743.3 650 1749.1 653.2C1754.8 656.5 1753.4 654.1 1756.4 660.2C1759.3 666.3 1759.7 670.8 1761.6 679.4C1763.6 687.9 1765.6 689.3 1764.7 696.8C1763.8 704.3 1761.4 710.6 1757.8 711.6C1754.1 712.6 1751.5 709.4 1749.1 701.1C1746.6 692.9 1749.3 684.5 1747.3 676.2C1745.3 668 1748.1 669.4 1740.3 665.8C1732.6 662.1 1724.4 661.4 1714.2 660.6C1704.1 659.7 1705.7 662 1696.8 662.3C1687.9 662.6 1680 666.5 1675.9 662C1671.8 657.4 1669.6 649.3 1679.4 642.8Z" fill="#f3f3f3" stroke="#d2d2d2" stroke-width=".8"/>
<path d="M1740.3 702L1749.1 700.6L1757.8 711.6L1756 714.6L1743 727.8L1738.6 722.9Z" fill="#666"/>
<path d="M1685.8 528.6C1683.9 529.7 1681.7 535 1682.3 542.7C1682.8 550.3 1684.6 554.9 1688.1 561.5C1691.7 568 1696.4 573 1697.5 570.8C1698.6 568.7 1694.5 559.7 1692.8 552.1C1691.2 544.4 1692.1 543.5 1690.5 538C1688.8 532.5 1687.7 527.5 1685.8 528.6Z" fill="#dcdcdc"/>
<path d="M1698.7 514.5C1700.3 512.3 1704.4 517.9 1710.4 523.9C1716.4 529.9 1717.9 533.8 1724.5 540.3C1731.1 546.9 1734.2 548 1738.6 552.1C1743 556.2 1744.4 557.3 1743.3 557.9C1742.2 558.6 1739.9 558.9 1733.9 554.9C1727.9 550.9 1724.6 545.8 1717.5 540.8C1710.3 535.8 1707.8 539.4 1703.4 533.3C1699 527.2 1697 516.7 1698.7 514.5Z" fill="#e2e2e2"/>
<path d="M1703 470C1698.5 467.9 1689.6 465.7 1682.1 466.1C1674.6 466.5 1664.3 470.2 1662.1 472.2C1659.8 474.3 1674.5 477.7 1669.9 477.5C1665.3 477.2 1640.1 470.4 1636.8 471C1633.4 471.6 1654.8 478.3 1651.6 480.9C1648.4 483.6 1620.8 483.8 1619.4 485.6C1617.9 487.5 1644.9 489.3 1643.8 490.9C1642.6 492.5 1615.2 492.7 1613.3 494.4C1611.4 496 1634.3 497 1633.3 500.1C1632.4 503.2 1608.7 509.3 1608 511.4C1607.4 513.6 1628.5 508.9 1629.8 511.8C1631.1 514.7 1614.7 524.9 1615 527.1C1615.3 529.3 1629.2 521.7 1631.6 523.6C1634 525.5 1631.6 530.9 1628.1 537.6C1624.6 544.3 1614 555.7 1612.4 560.2C1610.8 564.7 1619.4 558.8 1619.4 562C1619.4 565.1 1615.6 570.3 1612.4 577.6C1609.2 585 1605.8 591 1602 602C1598.1 613 1588.6 634.2 1591.5 637.7C1594.4 641.2 1608 628.7 1617.6 621.2C1627.2 613.7 1636.7 605.4 1643.8 596.8C1650.8 588.2 1652.8 582.5 1656 574.1C1659.2 565.8 1659.6 560.1 1661.2 551.5C1662.8 542.9 1661.8 535.4 1664.7 527.1C1667.5 518.8 1671.4 513.5 1676.9 506.2C1682.3 498.9 1688.9 492.3 1694.3 487C1699.7 481.8 1704.9 480.6 1706.5 477.5C1708.1 474.3 1707.5 472 1703 470Z" fill="url(#gMane)"/>
<path d="M1668 482C1652 500 1640 520 1636 548M1690 476C1668 500 1654 530 1648 566" stroke="#cf9a36" stroke-width="1.800" opacity=".6"/>
<path d="M1676 474C1660 480 1646 492 1636 506" stroke="#f0d48c" stroke-width="2" opacity=".8"/>
<path d="M1700 474C1680 478 1662 490 1650 508M1660 500C1648 520 1642 545 1640 575M1652 540C1644 575 1628 605 1606 632M1630 560C1622 585 1612 604 1598 622" stroke="#f2d58e" stroke-width="1.400" opacity=".7"/>
<path d="M1548 684C1528 690 1510 702 1496 720M1545 706C1522 728 1494 744 1458 752M1520 742C1496 754 1468 762 1436 768" stroke="#f0d084" stroke-width="1.400" opacity=".7"/>
<path d="M1722.6 491.5L1778.5 446.4L1728.7 495.7Z" fill="url(#gHorn)"/>
<path d="M1731 487L1734 491M1737 482L1740 486M1743 477L1746 481M1749 472L1752 476M1755 467L1758 471M1761 462L1764 466M1767 457L1769 460" stroke="#a89a78" stroke-width="1"/>
<path d="M1703.8 471.8L1700.6 489.2L1709.5 486.3Z" fill="#f1f1f1"/>
<path d="M1703.8 476L1701.5 488.7L1706.7 487.5Z" fill="#555"/>
<path d="M1716.3 502.8C1717.5 502.2 1721.4 502.8 1724.5 504.6C1727.7 506.5 1732.4 510.9 1732 512.2C1731.6 513.4 1725.3 511.9 1722.6 511C1720 510 1719.9 509.1 1718.6 507.5C1717.4 505.8 1715.1 503.3 1716.3 502.8Z" fill="#f39a1c"/>
<ellipse cx="1750.300" cy="545" rx="1.800" ry="2.800" fill="#333"/>
<path d="M1752.6 548.6L1757.3 551.1L1760.9 555.1L1765.7 557.4L1768.7 561.9L1773.9 564.1L1776.2 569.2L1781.7 571.2L1783.2 576.9L1789.1 578.8L1789.9 585L1796.2 586.6L1796.4 593.1L1803.2 594.2L1803.1 601.2L1810.4 601.7L1810.1 609L1817.8 608.7L1817.7 616.4L1825.6 614.8L1825.9 623L1834.1 620.4L1834.6 629L1842.7 625.8L1843.5 634.5L1851.6 631.1L1852.5 639.8L1860.6 636.5L1861.5 645.2L1869.7 642.1L1870.3 650.8L1878.5 647.7L1879.1 656.4L1887.3 653.3L1888 662L1896.1 658.8L1896.8 667.5L1905 664.4L1905.7 673.1L1913.8 670L1914.6 678.6L1922.7 675.3L1923.6 684L1932.1 681.5L1931.3 690.3L1940.4 692.5L1933.4 698.5L1936.4 707.1L1927.5 705.9L1926.2 714.6L1918.4 710.6L1916.5 719.1L1908.9 714.7L1906.7 723.2L1899.2 718.7L1897.2 727.1L1889.6 722.8L1887.5 731.4L1880 726.7L1876.6 734.9L1870.1 729L1864.9 736.3L1860.2 728.5L1852.6 733.6L1851.6 724.4L1842.9 725.4L1844.7 716.8L1836 717.1L1838.2 708.6L1829.5 708.8L1831.9 700.3L1823.1 700.3L1825.7 691.9L1817 691.6L1819.8 683.3L1811 682.7L1814.2 674.6L1805.5 673.5L1809.2 665.5L1800.5 664L1804.6 656.2L1796 654.4L1800.2 646.7L1791.9 644.8L1795.6 637.3L1787.8 635.3L1790.7 628L1783.4 626.1L1785.5 618.9L1778.6 616.8L1780.1 609.9L1773.8 607.6L1774.6 601L1768.9 598.3L1769.3 592L1764 589L1764.1 583L1759.6 579.4L1759.4 573.6L1755.8 569.5L1755.5 564L1752.8 559.3L1752.3 554L1750.1 549.3Z" fill="#d98a1e"/>
<path d="M1752.6 548.6L1757.2 551.2L1760.9 555L1765.5 557.7L1768.8 561.9L1773.4 564.5L1776.3 569.1L1781 571.8L1783.4 576.7L1788.2 579.6L1790.1 584.7L1795 587.5L1796.7 592.9L1801.9 595.4L1803.5 600.9L1808.9 603L1810.5 608.6L1816.2 610.3L1818.1 616L1824.1 616.8L1826.3 622.5L1832.5 622.7L1834.9 628.4L1841.2 628.2L1843.9 633.9L1850.2 633.6L1852.9 639.2L1859.2 638.9L1861.8 644.6L1868.2 644.4L1870.7 650.2L1877 650L1879.5 655.8L1885.8 655.6L1888.4 661.4L1894.6 661.2L1897.2 666.9L1903.5 666.8L1906.1 672.5L1912.4 672.3L1915 678L1921.2 677.7L1923.9 683.4L1930.3 683.7L1931.8 689.9L1937.7 693.2L1934.1 698.8L1934.2 705.3L1927.9 706.5L1925 712.1L1918.7 711.2L1915.4 716.6L1909.1 715.4L1905.6 720.6L1899.5 719.3L1896 724.6L1889.9 723.5L1886.4 728.8L1880.2 727.4L1876 732.2L1870.2 729.7L1865 733.5L1860.1 729.1L1853.7 731L1851.2 724.9L1845 723.5L1844.2 717.2L1838.2 715.3L1837.7 709.1L1831.7 707.1L1831.3 700.8L1825.4 698.6L1825.2 692.3L1819.3 690L1819.2 683.7L1813.4 681.2L1813.6 675L1808 672.2L1808.5 665.9L1803.1 662.7L1803.9 656.5L1798.6 653.2L1799.5 647L1794.3 643.7L1795 637.6L1790 634.3L1790.2 628.3L1785.2 625L1785 619.1L1780.2 615.9L1779.7 610.1L1775.1 606.8L1774.3 601.2L1770 597.6L1769 592.2L1765 588.4L1763.9 583.1L1760.3 579L1759.3 573.7L1756.3 569.3L1755.4 564L1753 559.3L1752.3 554L1750.1 549.3Z" fill="url(#gFire)" transform="translate(-0.5 0.6)"/>
<path d="M1754 552L1800 610" stroke="#fbf3d6" stroke-width="2.400" stroke-linecap="round" opacity=".8"/>
</g>
</svg>
<!-- ===== Aggiornamenti Lumia watermark ===== -->
<svg id="brandsvg" width="500" height="110" viewBox="1464 1132 500 110" style="left:1464px;top:1132px" fill="none">
<defs>
<linearGradient id="gIg" x1="0.15" y1="0.95" x2="0.85" y2="0.05"><stop offset="0" stop-color="#fcb045"/><stop offset="0.28" stop-color="#f77737"/><stop offset="0.52" stop-color="#e1306c"/><stop offset="0.78" stop-color="#b837c0"/><stop offset="1" stop-color="#8a4be0"/></linearGradient>
</defs>
<rect x="1466" y="1134" width="496.200" height="106" rx="53" fill="#9f9f9f"/>
<circle cx="1519.400" cy="1187.100" r="53.300" fill="#5b5b5b"/>
<!-- phone -->
<rect x="1502.700" y="1156.900" width="34.100" height="60.800" rx="3.400" fill="#fff"/>
<rect x="1505.300" y="1162.200" width="28.900" height="47.200" fill="#5b5b5b"/>
<rect x="1517.200" y="1158.900" width="5" height="1.200" rx=".6" fill="#8a8a8a"/>
<path d="M1517.400 1211.600l2-.3v2.100h-2zM1519.900 1211.200l2.500-.4v2.600h-2.500zM1517.400 1213.900h2v2.100l-2-.3zM1519.900 1213.900h2.500v2.600l-2.500-.4z" fill="#5b5b5b"/>
<path d="M1505.300 1191.500L1521.500 1209.400M1505.300 1195.200L1518.200 1209.400M1505.300 1198.800L1514.800 1209.400" stroke="#bdbdbd" stroke-width="1"/>
<path d="M1505.300 1202.800L1511.300 1209.400H1505.300Z" fill="#fff"/>
<text x="1508.600" y="1181.900" font-family="'Liberation Sans',sans-serif" font-size="11" fill="#ececec" textLength="23" lengthAdjust="spacingAndGlyphs">AL.it</text>
<path d="M1526.100 1181.600a1.700 1.700 0 0 1 3.200-.9l3.300 7.300l1.200-.5a1.600 1.600 0 0 1 2.100.7l.5-.2a1.600 1.600 0 0 1 2.100.8l.4-.1a1.600 1.600 0 0 1 2 .9l1.700 4.200c1.200 3 .2 5.400-2.400 6.500l-4.400 1.900c-2 .9-3.900.4-5.300-1l-5.900-5.400c-.9-.9-.2-2.400 1.100-2.200l3.200.9z" fill="#fff"/>
<!-- facebook -->
<circle cx="1608.100" cy="1211.100" r="18.500" fill="#6583c5"/>
<text x="1602.600" y="1221.400" font-family="'Liberation Sans',sans-serif" font-weight="bold" font-size="27.500" fill="#fff">f</text>
<!-- youtube -->
<circle cx="1679" cy="1211.100" r="18.500" fill="#e0574f"/>
<text x="1672.300" y="1208.700" font-family="'Liberation Sans',sans-serif" font-weight="bold" font-size="10.500" fill="#fff" textLength="13.200" lengthAdjust="spacingAndGlyphs">You</text>
<rect x="1669.800" y="1211.300" width="18" height="11.400" rx="3" fill="#fff"/>
<text x="1671.400" y="1220.700" font-family="'Liberation Sans',sans-serif" font-weight="bold" font-size="10.500" fill="#e0574f" textLength="14.800" lengthAdjust="spacingAndGlyphs">Tube</text>
<!-- twitter -->
<circle cx="1749.400" cy="1211.400" r="18.500" fill="#45bdee"/>
<path d="M1759.400 1205.200c-.7.300-1.500.5-2.300.6.800-.5 1.500-1.300 1.800-2.200-.8.500-1.700.8-2.600 1a4.100 4.100 0 0 0-7 3.700c-3.400-.2-6.400-1.800-8.400-4.300a4.100 4.100 0 0 0 1.300 5.400c-.7 0-1.300-.2-1.900-.5 0 2 1.400 3.700 3.300 4.100-.6.200-1.200.2-1.800.1.500 1.600 2 2.800 3.800 2.800a8.200 8.200 0 0 1-6 1.700 11.600 11.600 0 0 0 6.200 1.800c7.500 0 11.600-6.200 11.600-11.600v-.5c.8-.6 1.500-1.300 2-2.100z" fill="#fff"/>
<!-- instagram -->
<circle cx="1820" cy="1211.400" r="18.600" fill="url(#gIg)"/>
<rect x="1809.500" y="1200.900" width="21" height="21" rx="5" stroke="#fff" stroke-width="1.800"/>
<circle cx="1820" cy="1211.400" r="5" stroke="#fff" stroke-width="1.800"/>
<circle cx="1826.200" cy="1205.300" r="1.200" fill="#fff"/>
<!-- telegram -->
<circle cx="1891.200" cy="1211.400" r="19" fill="#55b3e8"/>
<path d="M1898.400 1204.800L1881.800 1212L1890.400 1214.200L1892.600 1220.800Z" fill="#fff"/>
</svg>
<!-- ===== taskbar icons ===== -->
<svg id="tbsvg" width="1980" height="58" viewBox="0 1262 1980 58" style="left:0;top:1262px" fill="none">
<defs>
<linearGradient id="gTg" x1="0.7" y1="0" x2="0.3" y2="1"><stop offset="0" stop-color="#37aee2"/><stop offset="1" stop-color="#1e96c8"/></linearGradient>
<radialGradient id="gCort" cx="0.5" cy="0.5" r="0.5"><stop offset="0.66" stop-color="#9fd8f5" stop-opacity="0"/><stop offset="0.8" stop-color="#9fd8f5" stop-opacity=".55"/><stop offset="1" stop-color="#9fd8f5" stop-opacity="0"/></radialGradient>
</defs>
<path d="M851 1262H1980V1263H851z" fill="#3a4a5c" opacity=".7"/>
<!-- start -->
<g fill="#fff">
<path d="M23 1282.400L32 1281.100V1290.300H23zM33.100 1280.900L46.800 1279V1290.300H33.100zM23 1291.400H32V1300.600L23 1299.400zM33.100 1291.400H46.800V1303L33.100 1300.900z"/>
</g>
<!-- cortana -->
<circle cx="104.300" cy="1291.200" r="14" fill="url(#gCort)"/>
<circle cx="104.300" cy="1291.200" r="10.200" stroke="#fff" stroke-width="2.600"/>
<!-- task view -->
<g stroke="#fff" stroke-width="1.400">
<rect x="162.400" y="1286.700" width="14" height="9.400"/>
<path d="M162.400 1283.600V1280.400M176.400 1283.600V1280.400M162.400 1282H176.400M162.400 1299.200V1302M176.400 1299.200V1302M162.400 1300.500H176.400"/>
<path d="M183.300 1280V1285M183.300 1291.600V1302"/>
</g>
<circle cx="183.300" cy="1288.300" r="1.900" fill="#fff"/>
<!-- settings gear -->
<g transform="translate(247.100 1291.200)">
<circle r="8.100" stroke="#fff" stroke-width="4.600"/>
<g fill="#fff">
<rect x="-3" y="-13.600" width="6" height="5" rx=".8"/>
<rect x="-3" y="-13.600" width="6" height="5" rx=".8" transform="rotate(45)"/>
<rect x="-3" y="-13.600" width="6" height="5" rx=".8" transform="rotate(90)"/>
<rect x="-3" y="-13.600" width="6" height="5" rx=".8" transform="rotate(135)"/>
<rect x="-3" y="-13.600" width="6" height="5" rx=".8" transform="rotate(180)"/>
<rect x="-3" y="-13.600" width="6" height="5" rx=".8" transform="rotate(225)"/>
<rect x="-3" y="-13.600" width="6" height="5" rx=".8" transform="rotate(270)"/>
<rect x="-3" y="-13.600" width="6" height="5" rx=".8" transform="rotate(315)"/>
</g>
</g>
<!-- telegram (round) -->
<circle cx="318.200" cy="1290.800" r="17" fill="url(#gTg)"/>
<path d="M307.600 1290.400L327.600 1282.600C328.600 1282.300 329.400 1282.900 329.100 1284.200L325.700 1300.200C325.500 1301.300 324.800 1301.600 323.900 1301.100L318.700 1297.300L316.200 1299.700C315.900 1300 315.700 1300.200 315.200 1300.200L315.600 1294.900L325.200 1286.200C325.600 1285.800 325.100 1285.600 324.600 1286L312.700 1293.500L307.600 1291.900C306.500 1291.600 306.500 1290.800 307.600 1290.400Z" fill="#fff"/>
<path d="M315.200 1300.200L315.600 1294.900L318.700 1297.300L316.200 1299.700C315.900 1300 315.700 1300.200 315.200 1300.200Z" fill="#b5d8ea"/>
<!-- edge -->
<path d="M374.400 1290.200C375.600 1280.200 383 1275.300 390 1275.300C398.300 1275.300 403 1281.400 403 1289.300V1292.600H384C384.200 1297.800 388.400 1300.200 393.200 1300.200C396.600 1300.200 399.600 1299.200 402 1297.700V1304C399.400 1305.400 395.800 1306.300 392 1306.300C383.200 1306.300 377 1300.900 377 1292.500C377 1286.900 380.300 1282.400 385 1280.400C379.800 1281.500 376.300 1285.400 374.400 1290.200ZM384.200 1287.600H395.200C395.100 1284 393.100 1281.700 389.800 1281.700C386.600 1281.700 384.600 1284.200 384.200 1287.600Z" fill="#1b7fd6" fill-rule="evenodd"/>
<!-- twitter -->
<rect x="443.200" y="1273.500" width="34.600" height="35" fill="#2aa3ef"/>
<path d="M471.800 1283.600c-.8.400-1.700.6-2.600.7.900-.6 1.700-1.500 2-2.500-.9.500-1.900.9-2.900 1.100a4.600 4.600 0 0 0-7.900 4.200c-3.800-.2-7.200-2-9.500-4.800a4.600 4.600 0 0 0 1.400 6.100c-.7 0-1.400-.2-2.100-.6 0 2.200 1.600 4.200 3.700 4.600-.7.200-1.400.2-2.100.1.600 1.800 2.300 3.200 4.300 3.200a9.200 9.200 0 0 1-6.800 1.900 13 13 0 0 0 7 2.100c8.500 0 13.100-7 13.100-13.100v-.6c.9-.7 1.700-1.500 2.300-2.400z" fill="#fff"/>
<!-- snip & sketch -->
<g stroke="#fff" stroke-width="1.300" stroke-linejoin="round">
<path d="M518.600 1294.600L529 1284.200L533.800 1289L523.400 1299.400Z"/>
<path d="M529.400 1281.600L532.800 1278.600L537.800 1283.600L534.600 1286.800Z"/>
<path d="M536.800 1289.800c2-1.800 4.400-1.600 6 .200M526.600 1299.200c-1.600 1.500-1.600 3.600.2 5.100"/>
<rect x="533.200" y="1297.400" width="10" height="6.600"/>
<path d="M535.400 1297.400v-2.200a2.800 2.800 0 0 1 5.600 0"/>
</g>
<!-- store -->
<path d="M594.800 1282.400V1280.600a7.900 6.200 0 0 1 15.800 0V1282.400" stroke="#fff" stroke-width="1.500"/>
<path d="M598 1282.400V1281.400a4.700 4.200 0 0 1 9.400 0V1282.400" stroke="#fff" stroke-width="1.200"/>
<rect x="584.600" y="1282.300" width="34.400" height="23.500" rx="1.500" fill="#fff"/>
<rect x="594.900" y="1287.600" width="6.300" height="6.300" fill="#f25022"/><rect x="602.300" y="1287.600" width="6.300" height="6.300" fill="#7fba00"/>
<rect x="594.900" y="1295" width="6.300" height="6.300" fill="#00a4ef"/><rect x="602.300" y="1295" width="6.300" height="6.300" fill="#ffb900"/>
<!-- telegram (plane) -->
<path d="M656.600 1289.600L687.600 1276.600C689.400 1276 690.600 1277 690.200 1279.200L685.600 1303.200C685.300 1304.800 684.200 1305.600 682.800 1304.800L673 1298.600L667.800 1294.600L683.800 1281.200L662.400 1292.800L657 1291.400C655.600 1291 655.400 1290.100 656.600 1289.600Z" fill="#fff"/>
<path d="M667.800 1294.600L673 1298.600L669.600 1303.600C669 1304.400 668.200 1304.200 668.200 1303.200Z" fill="#fff"/>
<!-- files app -->
<rect x="726.300" y="1273.500" width="34.900" height="34.600" fill="#1272d3"/>
<g fill="#fff">
<path d="M735.400 1283.200h5l1.300 1.300h9.600a1 1 0 0 1 1 1v2h-17.900v-3.300a1 1 0 0 1 1-1z" opacity=".95"/>
<path d="M735 1288.400h18.400a1 1 0 0 1 1 1v8.800h-2.600v-5.400a1.500 1.500 0 0 0-1.500-1.500h-12.200a1.500 1.500 0 0 0-1.500 1.500v5.400H734v-8.800a1 1 0 0 1 1-1z"/>
<path d="M738.700 1292.800h11a.9.900 0 0 1 .9.900v4.500h-2.300v-2.300a.9.900 0 0 0-.9-.9h-6.400a.9.900 0 0 0-.9.900v2.300h-2.300v-4.500a.9.900 0 0 1 .9-.9z"/>
</g>
<!-- file explorer -->
<path d="M799.600 1280.200a1.400 1.400 0 0 1 1.400-1.400h9l2.200 2.600h17a1.200 1.200 0 0 1 1.200 1.200v19.600a1.200 1.200 0 0 1-1.200 1.200h-28.400a1.200 1.200 0 0 1-1.200-1.200z" fill="#f6cf62"/>
<path d="M799.600 1283.400h30.800v18.800a1.200 1.200 0 0 1-1.200 1.200h-28.400a1.200 1.200 0 0 1-1.200-1.200z" fill="#fbe29a"/>
<path d="M805.800 1291.200h18.600l2.200 2.600v9.600h-23z" fill="#3d9fdc"/>
<path d="M809.800 1296.200h10.400v7.200h-10.400z" fill="#fbe29a"/>
<path d="M812.200 1298.400h5.600v5h-5.600z" fill="#f6cf62"/>
<!-- onenote -->
<rect x="864.400" y="1273.400" width="35.600" height="37" rx="2.500" fill="#7719aa"/>
<path d="M869 1279.800L884.400 1277V1305L869 1302Z" fill="#f9ecff"/>
<path d="M885.800 1279.800H894.400L897.200 1282V1301.800H885.800Z" fill="#f9ecff"/>
<g stroke="#5c1688" stroke-width="1.300"><path d="M885.800 1283.700h5.800M885.800 1286.600h5.800M885.800 1289.500h5.800M885.800 1292.400h5.800M885.800 1295.300h5.800M885.800 1298.200h5.800"/></g>
<path d="M894.600 1287v4.600M894.600 1293.600v4.600" stroke="#d9b8ec" stroke-width="1.200"/>
<text x="871.400" y="1297.200" font-family="'Liberation Sans',sans-serif" font-weight="bold" font-size="17" fill="#4b1470" textLength="10.400" lengthAdjust="spacingAndGlyphs">N</text>
<!-- system tray -->
<g stroke="#fff" stroke-width="1.300">
<circle cx="1463.600" cy="1284.200" r="3.600"/>
<path d="M1458.600 1290.800a6 6 0 0 1 10.900 2.700" />
<circle cx="1454.300" cy="1293.400" r="3.600"/>
<path d="M1448.800 1302.200a5.800 5.800 0 0 1 11.200 0"/>
<path d="M1507.800 1295.700L1517 1286.600L1526.200 1295.700"/>
<path d="M1551.800 1287.400H1555.200L1559.800 1282.800V1299.600L1555.200 1295H1551.800Z" stroke-linejoin="round"/>
<path d="M1563 1287.800a4.800 4.800 0 0 1 0 6.800"/>
<path d="M1566.300 1284.800a9 9 0 0 1 0 12.800" opacity=".7"/>
<path d="M1569.600 1281.900a13.100 13.100 0 0 1 0 18.600" opacity=".4"/>
<rect x="1599.800" y="1285.600" width="19.600" height="12"/>
<path d="M1620.600 1289.400V1294" stroke-width="1.800"/>
<path d="M1649.200 1299.600a14.600 14.600 0 0 1 14.600-14.600M1654 1299.600a9.800 9.800 0 0 1 9.800-9.800M1658.800 1299.600a5 5 0 0 1 5-5" stroke-width="1.500"/>
<path d="M1704.200 1300.600L1715 1282.200a2.400 2.400 0 0 1 4.200 2.400L1708.400 1303ZM1704.200 1300.600L1703.800 1302.800L1708.400 1303" stroke-linejoin="round"/>
<path d="M1702.600 1302.600c-3.600 .6-6.200-1.600-6.200-4.600c0-3.400 3.200-5.400 6.600-4M1714 1292.600c3 1.400 5.600-.4 5.600-2.600c0-1.400-.9-2.300-2-2.600"/>
<path d="M1921.400 1280H1943.600V1297.200H1936L1932.500 1301.600L1929 1297.200H1921.400Z" stroke-width="1.500"/>
</g>
<rect x="1602.400" y="1288.200" width="8.400" height="6.800" fill="#fff"/>
<circle cx="1663.800" cy="1299.400" r="2" fill="#fff"/>
<path d="M1972.600 1262V1320" stroke="#5d6777" stroke-width="1"/>
</svg>
<!-- ===== text labels ===== -->
<div class="t" id="apptitle" style="left:950.10px;top:14.84px;font-size:18.5px;color:#fff;transform:scaleX(1.0355)">OneNote</div>
<div class="t" id="tabHome" style="left:20.99px;top:62.34px;font-size:18.5px;color:#fff;transform:scaleX(1.0434)">Home</div>
<div class="t" id="tabInsert" style="left:120.03px;top:62.34px;font-size:18.5px;color:#fff;transform:scaleX(1.0204)">Insert</div>
<div class="t" id="tabDraw" style="left:215.37px;top:62.34px;font-size:18.5px;color:#fff;transform:scaleX(0.9786);font-weight:700">Draw</div>
<div class="t" id="tabView" style="left:309.00px;top:62.34px;font-size:18.5px;color:#fff;transform:scaleX(0.9827)">View</div>
<div class="t" id="tabHelp" style="left:393.46px;top:62.34px;font-size:18.5px;color:#fff;transform:scaleX(1.0683)">Help</div>
<div class="t" id="tabClass" style="left:482.63px;top:62.34px;font-size:18.5px;color:#fff;transform:scaleX(0.9983)">Class Notebook</div>
<div class="t" id="tabShare" style="left:1811.45px;top:62.34px;font-size:18.5px;color:#fff;transform:scaleX(0.9534)">Share</div>
<div class="t" id="badge1" style="left:1751.06px;top:52.41px;font-size:12.5px;color:#fff;transform:scaleX(1.0000)">1</div>
<div class="t" id="lblShapes" style="left:936.46px;top:113.34px;font-size:18.5px;color:#fff;transform:scaleX(0.9336)">Shapes</div>
<div class="t" id="lblInkShape" style="left:1065.05px;top:113.34px;font-size:18.5px;color:#fff;transform:scaleX(1.0031)">Ink to Shape</div>
<div class="t" id="lblInkText" style="left:1238.02px;top:113.34px;font-size:18.5px;color:#6f6d6b;transform:scaleX(1.0237)">Ink to Text</div>
<div class="t" id="lblRuler" style="left:1394.08px;top:113.34px;font-size:18.5px;color:#fff;transform:scaleX(0.9795)">Ruler</div>
<div class="t" id="lblMath" style="left:1506.92px;top:113.34px;font-size:18.5px;color:#fff;transform:scaleX(1.0920)">Math</div>
<div class="t" id="nbname" style="left:200.58px;top:169.84px;font-size:18.5px;color:#fff;transform:scaleX(0.9826)">Personale (Web)</div>
<div class="t" id="secVision" style="left:53.70px;top:223.84px;font-size:18.5px;color:#fff;transform:scaleX(1.0222)">Vision</div>
<div class="t" id="secQuick" style="left:53.12px;top:275.84px;font-size:18.5px;color:#fff;transform:scaleX(1.0170)">Quick Notes</div>
<div class="t" id="pgDark" style="left:332.04px;top:222.84px;font-size:18.5px;color:#fff;transform:scaleX(1.0134)">Dark Theme &lt;3</div>
<div class="t" id="addSection" style="left:70.13px;top:1226.84px;font-size:18.5px;color:#fff;transform:scaleX(0.9869)">Section</div>
<div class="t" id="addPage" style="left:348.13px;top:1226.84px;font-size:18.5px;color:#fff;transform:scaleX(0.9461)">Page</div>
<div class="t" id="pgtitle" style="left:561.21px;top:184.62px;font-size:33.5px;color:#111;transform:scaleX(1.0486);font-weight:300;font-family:'Noto Sans CJK SC','Liberation Sans',sans-serif">Dark Theme &lt;3</div>
<div class="t" id="pgdate" style="left:563.50px;top:237.95px;font-size:16.6px;color:#767676;transform:scaleX(1.0561)">Wednesday, February 6, 2019</div>
<div class="t" id="pgtime" style="left:837.15px;top:237.95px;font-size:16.6px;color:#767676;transform:scaleX(1.0981)">9:01 AM</div>
<div class="t" id="tbtitle" style="left:902.65px;top:1284.19px;font-size:17.5px;color:#fff;transform:scaleX(1.0304)">OneNote - OneNote</div>
<div class="t" id="tblang" style="left:1750.03px;top:1286.14px;font-size:16px;color:#fff;transform:scaleX(1.0233)">ITA</div>
<div class="t" id="tbclock" style="left:1802.20px;top:1271.62px;font-size:17px;color:#fff;transform:scaleX(1.0035)">9:21:07 AM</div>
<div class="t" id="tbdate" style="left:1810.65px;top:1298.62px;font-size:17px;color:#fff;transform:scaleX(1.0651)">2/6/2019</div>
<div class="t" id="brand" style="left:1594.00px;top:1144.69px;font-size:34px;color:#fff;transform:scaleX(0.9571);font-weight:300;font-family:'Noto Sans CJK SC','Liberation Sans',sans-serif">Aggiornamenti Lumia</div>
</body>
</html>
